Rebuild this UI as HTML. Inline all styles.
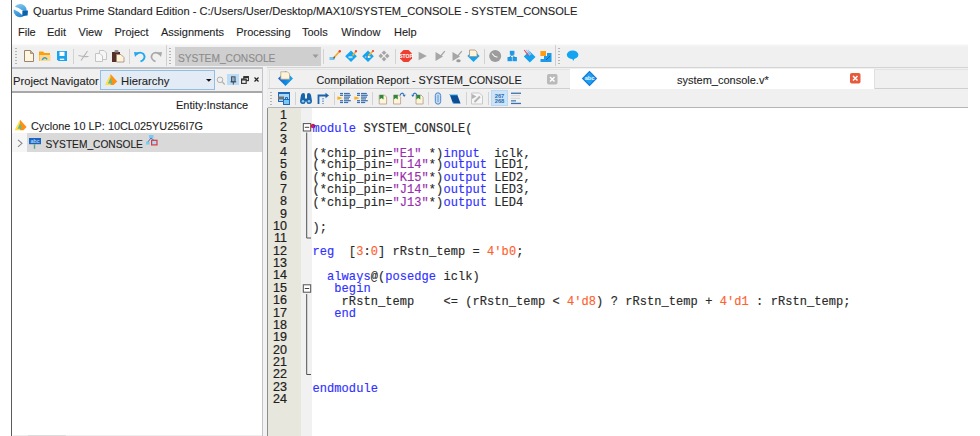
<!DOCTYPE html>
<html><head><meta charset="utf-8">
<style>
*{margin:0;padding:0;box-sizing:border-box}
html,body{width:980px;height:436px;overflow:hidden;background:#fff;position:relative}
body{font-family:"Liberation Sans",sans-serif;font-size:11px;color:#1e1e1e}
.a{position:absolute}
.t{position:absolute;white-space:pre;line-height:1;-webkit-text-stroke:0.1px}
svg{position:absolute;overflow:visible}
.sep{position:absolute;width:1px;background:#d2d2d2}
.grip{position:absolute;width:1.5px;background:repeating-linear-gradient(#b4b4b4 0 1px,transparent 1px 3px)}
.code{position:absolute;left:312.5px;top:109.5px;font-family:"Liberation Mono",monospace;font-size:12px;line-height:10.851px;white-space:pre;color:#2a2a2a;transform:scaleY(1.14);transform-origin:0 0;-webkit-text-stroke:0.15px;letter-spacing:0.07px}
.ln{position:absolute;left:268px;width:19px;top:108.6px;-webkit-text-stroke:0.2px;text-align:right;font-family:"Liberation Sans",sans-serif;font-size:12.5px;line-height:12.37px;white-space:pre;color:#202020}
.k{color:#3030ff}
.s{color:#9a2cb0}
.n{color:#ff6030}
</style></head><body>
<!-- left border -->
<div class="a" style="left:11px;top:0;width:1px;height:436px;background:#5a5a5a"></div>

<!-- title bar -->
<svg style="left:13px;top:3px" width="16" height="16" viewBox="0 0 16 16">
  <defs><linearGradient id="qg" x1="0" y1="0" x2="0.3" y2="1"><stop offset="0" stop-color="#86ccf2"/><stop offset="1" stop-color="#2c8ad0"/></linearGradient></defs>
  <circle cx="7.2" cy="7.7" r="6.6" fill="url(#qg)"/>
  <path d="M1.2 3.6 Q5.5 4.2 10.2 8 L9.8 12.6 Q5.5 8 0.9 6.4 Z" fill="#fff"/>
  <path d="M9.4 7.9 L15 7.4 L14.6 12.6 L9.3 13.1 Z" fill="#0a62ae"/>
</svg>
<div class="t" style="left:33px;top:6px;font-size:11.1px">Quartus Prime Standard Edition - C:/Users/User/Desktop/MAX10/SYSTEM_CONSOLE - SYSTEM_CONSOLE</div>

<!-- menu bar -->
<div class="t" style="left:18px;top:27px">File</div>
<div class="t" style="left:47px;top:27px">Edit</div>
<div class="t" style="left:78.5px;top:27px">View</div>
<div class="t" style="left:114.4px;top:27px">Project</div>
<div class="t" style="left:161px;top:27px">Assignments</div>
<div class="t" style="left:236.2px;top:27px">Processing</div>
<div class="t" style="left:302px;top:27px">Tools</div>
<div class="t" style="left:341.3px;top:27px">Window</div>
<div class="t" style="left:394px;top:27px">Help</div>

<!-- main toolbar -->
<div class="a" style="left:12px;top:44px;width:956px;height:23px;background:linear-gradient(#fafafa,#f0f0f0 3px)"></div>
<div class="a" style="left:12px;top:66.5px;width:956px;height:1px;background:#d0d0d0"></div>
<div class="grip" style="left:15px;top:48px;height:17px"></div>
<!-- new -->
<svg style="left:23px;top:49px" width="12" height="14" viewBox="0 0 12 14">
  <path d="M1.5 1.5 H7.5 L10.5 4.5 V12.5 H1.5Z" fill="#fff6de" stroke="#9e8270" stroke-width="1"/>
  <path d="M7.5 1.5 V4.5 H10.5" fill="#c8b0a0" stroke="#9e8270" stroke-width="0.8"/>
</svg>
<!-- open -->
<svg style="left:38px;top:50px" width="14" height="12" viewBox="0 0 14 12">
  <path d="M1 1.5 H5 L6.5 3 H12 V11 H1Z" fill="#ff9f10"/>
  <path d="M1.5 5 H12.5 V11 H1.5Z" fill="#ffd98a"/>
  <path d="M4.2 9.8 Q6.5 5.8 9.2 9.4" fill="none" stroke="#2aa0d8" stroke-width="1.5"/>
</svg>
<!-- save -->
<svg style="left:56px;top:50px" width="12" height="12" viewBox="0 0 12 12">
  <path d="M1 1 H11 V11 H2.5 L1 9.5Z" fill="#1aa4f0"/>
  <rect x="3.5" y="1.8" width="5" height="4.2" fill="#fff"/>
  <rect x="3.8" y="8.6" width="4.4" height="1.4" fill="#e8f4ff"/>
</svg>
<div class="sep" style="left:73px;top:49px;height:15px"></div>
<!-- cut -->
<svg style="left:77px;top:50px" width="13" height="12" viewBox="0 0 13 12">
  <path d="M10.5 1 L4 10.5 M1.5 5.5 Q6 7 11.5 6.5" fill="none" stroke="#b4b4b4" stroke-width="1.1"/>
</svg>
<!-- copy -->
<svg style="left:94px;top:49px" width="14" height="14" viewBox="0 0 14 14">
  <path d="M5.5 1.5 H10 L12.5 4 V10.5 H5.5Z" fill="#f6f6f6" stroke="#c4c4c4"/>
  <path d="M1.5 4.5 H6 L8.5 7 V12.5 H1.5Z" fill="#f8f8f8" stroke="#c4c4c4"/>
</svg>
<!-- paste -->
<svg style="left:111px;top:49px" width="14" height="14" viewBox="0 0 14 14">
  <path d="M1 3 H9 V13 H1Z" fill="#553028"/>
  <rect x="3.5" y="1" width="4" height="2.4" rx="1" fill="#8a8a8a"/>
  <path d="M5.5 5.5 H10 L13 8.5 V13 H5.5Z" fill="#fff4d8" stroke="#a08878" stroke-width="0.8"/>
</svg>
<div class="sep" style="left:129px;top:49px;height:15px"></div>
<!-- undo -->
<svg style="left:133px;top:50px" width="14" height="13" viewBox="0 0 14 13">
  <path d="M3 4.5 Q7 1 10.5 4 Q13 7.5 9.5 10.5 L7.5 11.5" fill="none" stroke="#20a8f0" stroke-width="1.8"/>
  <path d="M1 2 L6 2.5 L2 7Z" fill="#20a8f0"/>
</svg>
<!-- redo -->
<svg style="left:149px;top:50px" width="14" height="13" viewBox="0 0 14 13">
  <path d="M11 4.5 Q7 1 3.5 4 Q1 7.5 4.5 10.5 L6.5 11.5" fill="none" stroke="#a8a8a8" stroke-width="1.6"/>
  <path d="M13 2 L8 2.5 L12 7Z" fill="#a8a8a8"/>
</svg>
<div class="a" style="left:166px;top:45px;width:1px;height:21px;background:#d0d0d0"></div>
<div class="grip" style="left:169px;top:48px;height:17px"></div>
<!-- project combo -->
<div class="a" style="left:175px;top:46.5px;width:146px;height:19.5px;background:#cfcfcf"></div>
<div class="t" style="left:178px;top:53.5px;color:#8c8c8c;font-size:10.2px">SYSTEM_CONSOLE</div>
<svg style="left:312px;top:54px" width="7" height="5" viewBox="0 0 7 5"><path d="M0.5 0.5 H6.5 L3.5 4Z" fill="#9a9a9a"/></svg>
<div class="sep" style="left:323px;top:49px;height:15px"></div>
<!-- pencil icon 1 -->
<svg style="left:328px;top:49px" width="14" height="13" viewBox="0 0 14 13">
  <rect x="1.5" y="8" width="5" height="3" fill="#6ec6f4"/>
  <path d="M6 8.5 L11.5 2.5" stroke="#f0b030" stroke-width="1.8"/>
  <path d="M5.5 9.5 L6.8 7.6" stroke="#806040" stroke-width="1.4"/>
  <circle cx="11.8" cy="2.2" r="1.2" fill="#f04030"/>
</svg>
<!-- diamond pencil -->
<svg style="left:344px;top:49px" width="14" height="14" viewBox="0 0 14 14">
  <path d="M7 1.5 L12.8 7.3 L7 13 L1.2 7.3Z" fill="#12a4f0"/>
  <rect x="4.5" y="7.2" width="4" height="2" fill="#b0e0ff"/>
  <path d="M8.6 6.4 L12 2.4" stroke="#f0b030" stroke-width="1.6"/>
  <circle cx="12" cy="2.2" r="1.1" fill="#f04030"/>
</svg>
<!-- diamond eye -->
<svg style="left:361px;top:49px" width="14" height="14" viewBox="0 0 14 14">
  <path d="M7 1.5 L12.8 7.3 L7 13 L1.2 7.3Z" fill="#12a4f0"/>
  <path d="M3.5 8 Q7 5.8 10.2 8 Q7 10 3.5 8Z" fill="#fff"/>
  <circle cx="6" cy="8" r="1" fill="#4a7ab8"/>
  <path d="M7.6 6.6 L11.8 2.2" stroke="#f0b030" stroke-width="1.6"/>
  <circle cx="12" cy="2" r="1.1" fill="#f04030"/>
</svg>
<!-- gray diamonds -->
<svg style="left:377px;top:49px" width="14" height="14" viewBox="0 0 14 14" fill="#a4a4a4">
  <path d="M7 1.5 L9.3 3.8 L7 6 L4.7 3.8Z"/>
  <path d="M3.8 4.6 L6.1 6.9 L3.8 9.2 L1.5 6.9Z"/>
  <path d="M10.2 4.6 L12.5 6.9 L10.2 9.2 L7.9 6.9Z"/>
  <path d="M7 7.8 L9.3 10.1 L7 12.4 L4.7 10.1Z"/>
</svg>
<div class="sep" style="left:395px;top:49px;height:15px"></div>
<!-- stop -->
<svg style="left:399px;top:49px" width="14" height="14" viewBox="0 0 14 14">
  <path d="M4.5 1 H9.5 L13 4.5 V9.5 L9.5 13 H4.5 L1 9.5 V4.5Z" fill="#ee3e30"/>
  <text x="7" y="9" font-family="Liberation Sans" font-size="5" font-weight="bold" fill="#fff" text-anchor="middle">STOP</text>
</svg>
<!-- play -->
<svg style="left:418px;top:51px" width="10" height="10" viewBox="0 0 10 10"><path d="M0.6 0.8 L8.8 5 L0.6 9.2Z" fill="#a6a6a6"/></svg>
<!-- play check -->
<svg style="left:434px;top:50px" width="12" height="12" viewBox="0 0 12 12">
  <path d="M1.5 2 L9 6.5 L1.5 11Z" fill="#a6a6a6"/>
  <path d="M5.5 7.5 L10.8 1.2" stroke="#a6a6a6" stroke-width="1.3"/>
</svg>
<!-- play dot -->
<svg style="left:451px;top:50px" width="13" height="13" viewBox="0 0 13 13">
  <path d="M1.5 2 L9 6.5 L1.5 11Z" fill="#a6a6a6"/>
  <path d="M5.5 7.5 L10.8 1.2" stroke="#a6a6a6" stroke-width="1.3"/>
  <ellipse cx="7.5" cy="10.8" rx="2.2" ry="1.5" fill="#9a9a9a"/>
</svg>
<!-- diamond doc -->
<svg style="left:466px;top:49px" width="15" height="14" viewBox="0 0 15 14">
  <path d="M7.5 1 L13.6 7 L7.5 13 L1.4 7Z" fill="#10a4f0"/>
  <path d="M3.5 1 H9 L11 3 V7.5 H3.5Z" fill="#fff4d8" stroke="#a89080" stroke-width="0.8"/>
</svg>
<div class="sep" style="left:484px;top:49px;height:15px"></div>
<!-- clock -->
<svg style="left:488px;top:49px" width="14" height="14" viewBox="0 0 14 14">
  <circle cx="7.2" cy="7" r="6" fill="#9c9c9c"/>
  <path d="M4 4.5 L6.5 7.2 L9.5 8.2" fill="none" stroke="#f4f4f4" stroke-width="1.1"/>
</svg>
<!-- hierarchy -->
<svg style="left:506px;top:50px" width="13" height="13" viewBox="0 0 13 13" fill="#1a9ae8">
  <rect x="3.8" y="0.8" width="4.6" height="4" />
  <rect x="1.5" y="7" width="4.4" height="4.2"/>
  <rect x="6.5" y="7" width="4.4" height="4.2"/>
  <path d="M6 4.5 L3.5 7.5 M6 4.5 L8.8 7.5" stroke="#1a6ab0" stroke-width="0.9"/>
</svg>
<!-- diamond stripes -->
<svg style="left:522px;top:49px" width="15" height="14" viewBox="0 0 15 14">
  <path d="M7.5 2 L13.5 8 L7.8 13.4 L1.8 7.6Z" fill="#12a2f0"/>
  <path d="M2.2 1 L6.8 7" stroke="#e84a50" stroke-width="1.2"/>
  <path d="M4.2 0.8 L7.8 6.5 M6 0.8 L9 5.8" stroke="#a8c8f0" stroke-width="1.1"/>
</svg>
<!-- chip -->
<svg style="left:539px;top:50px" width="14" height="13" viewBox="0 0 14 13">
  <rect x="1.4" y="1" width="5.6" height="5" fill="#ff9c10"/>
  <path d="M5 6 H8 V3 H12.5 V12 H1.5 V9 H5Z" fill="#1a9ae8"/>
  <path d="M7 10 L11 6" stroke="#1060b0" stroke-width="1"/>
</svg>
<div class="a" style="left:555px;top:45px;width:1px;height:21px;background:#d0d0d0"></div>
<div class="grip" style="left:558px;top:48px;height:17px"></div>
<!-- bubble -->
<svg style="left:566px;top:50px" width="14" height="12" viewBox="0 0 14 12">
  <ellipse cx="6.6" cy="4.8" rx="5.8" ry="4.3" fill="#12a4f0"/>
  <path d="M5.5 8 L7.5 11 L8.5 7.5Z" fill="#12a4f0"/>
</svg>
<!-- nav panel -->
<div class="a" style="left:12px;top:67px;width:251px;height:24px;background:#f0f0f0"></div>
<div class="a" style="left:12px;top:67px;width:251px;height:1.5px;background:#c0c4c8"></div>
<div class="a" style="left:12px;top:90.5px;width:251px;height:2px;background:#a8a8a8"></div>
<div class="t" style="left:13px;top:75.5px;font-size:11.2px">Project Navigator</div>
<div class="a" style="left:100px;top:70px;width:115px;height:19.5px;background:#e3ebf4;border:1px solid #92bde4"></div>
<svg style="left:104px;top:73px" width="14" height="13" viewBox="0 0 14 13">
  <path d="M6.5 1 L1 12 H6.5Z" fill="#ffe040"/>
  <path d="M6.5 1 L13.2 8.5 L9.5 12 H6.5Z" fill="#ff9010"/>
  <path d="M6.5 4.5 L4 10.5 H8.5Z" fill="#62b890"/>
</svg>
<div class="t" style="left:121px;top:76px;font-size:11.3px">Hierarchy</div>
<svg style="left:206px;top:78.5px" width="6" height="3" viewBox="0 0 6 3"><path d="M0 0 H5.6 L2.8 2.8Z" fill="#111"/></svg>
<svg style="left:216px;top:76px" width="10" height="9" viewBox="0 0 10 9">
  <circle cx="4" cy="3.8" r="2.8" fill="none" stroke="#b0b0b0" stroke-width="1"/>
  <path d="M6 5.8 L8.8 8.5" stroke="#b0b0b0" stroke-width="1.2"/>
</svg>
<div class="a" style="left:227px;top:74px;width:11.5px;height:11px;background:#bcdcf6"></div>
<svg style="left:230px;top:76px" width="7" height="9" viewBox="0 0 7 9">
  <rect x="1.5" y="0.8" width="3.6" height="5" fill="#90a8c0" stroke="#3c4c5c" stroke-width="0.9"/>
  <path d="M0.5 5.8 H6.2 M3.3 5.8 V8.6" stroke="#3c4c5c" stroke-width="1"/>
</svg>
<svg style="left:241px;top:76px" width="8" height="8" viewBox="0 0 8 8">
  <rect x="2.8" y="0.6" width="4.6" height="4" fill="none" stroke="#303030" stroke-width="1.1"/>
  <rect x="0.6" y="3" width="4.6" height="4.4" fill="#f0f0f0" stroke="#303030" stroke-width="1.1"/>
  <path d="M0.6 3.8 H5.2 M2.8 1.4 H7.4" stroke="#303030" stroke-width="1.2"/>
</svg>
<svg style="left:254px;top:77px" width="5" height="5" viewBox="0 0 5 5"><path d="M0.5 0.5 L4.5 4.5 M4.5 0.5 L0.5 4.5" stroke="#222" stroke-width="1.2"/></svg>

<div class="a" style="left:12px;top:92.5px;width:250px;height:344px;background:#fff"></div>
<div class="a" style="left:262px;top:67px;width:1.5px;height:369px;background:#c0c4c8"></div>
<div class="a" style="left:263px;top:67px;width:4px;height:369px;background:#f2f2f2"></div>
<div class="t" style="left:176px;top:100px">Entity:Instance</div>
<svg style="left:14px;top:118.5px" width="14" height="12" viewBox="0 0 14 12">
  <path d="M6 0.8 L0.6 11.2 H6Z" fill="#ffe040"/>
  <path d="M6 0.8 L12.6 8 L9.4 11.2 H6Z" fill="#ff9010"/>
  <path d="M6 4.2 L3.6 9.8 H8Z" fill="#62b890"/>
</svg>
<div class="t" style="left:31px;top:121px;font-size:10.9px">Cyclone 10 LP: 10CL025YU256I7G</div>
<div class="a" style="left:12px;top:133px;width:15px;height:18.5px;background:#f6f6f6"></div>
<div class="a" style="left:27px;top:133px;width:235px;height:18.5px;background:#d9d9d9"></div>
<svg style="left:17px;top:139px" width="6" height="9" viewBox="0 0 6 9"><path d="M1 0.8 L5 4.3 L1 7.8" fill="none" stroke="#888" stroke-width="1.1"/></svg>
<svg style="left:28px;top:137px" width="14" height="13" viewBox="0 0 14 13">
  <rect x="1" y="1" width="12" height="6.2" fill="#1a64c0"/>
  <text x="7" y="6.2" font-family="Liberation Sans" font-size="5.5" fill="#cfe4ff" text-anchor="middle">abc</text>
  <path d="M6.5 7.2 V11.8" stroke="#58a878" stroke-width="1.4"/>
</svg>
<div class="t" style="left:45.5px;top:139.5px;font-size:10.2px">SYSTEM_CONSOLE</div>
<svg style="left:145px;top:134px" width="14" height="12" viewBox="0 0 14 12">
  <rect x="4" y="1" width="4.5" height="3.2" fill="#7ccaf4"/>
  <rect x="1" y="7.6" width="3.6" height="3" fill="#7ccaf4"/>
  <path d="M6 4 L3 7.8 M6 4 L9 6.4" stroke="#3a68a8" stroke-width="0.9"/>
  <rect x="6.6" y="6.3" width="5.4" height="4.6" fill="#a8dcf8" stroke="#e03840" stroke-width="1.2"/>
</svg>
<div class="a" style="left:13px;top:435px;width:249px;height:1px;background:#eeeeee"></div>
<div class="a" style="left:28px;top:435px;width:38px;height:1px;background:#dcdcdc"></div>

<!-- editor panel -->
<div class="a" style="left:267px;top:67px;width:701px;height:369px;background:#f0f0f0"></div>
<div class="a" style="left:267px;top:67px;width:1px;height:41px;background:#ececec"></div><div class="a" style="left:267px;top:108px;width:1px;height:328px;background:#8c8c8c"></div>
<!-- tab row -->
<div class="a" style="left:267px;top:66.5px;width:701px;height:1.5px;background:#d4d4d4"></div>
<div class="a" style="left:268px;top:69px;width:302px;height:1px;background:#e4e4e4"></div>
<div class="a" style="left:874px;top:69px;width:94px;height:1px;background:#e4e4e4"></div>

<div class="a" style="left:268.5px;top:70px;width:1px;height:18.5px;background:#e0e0e0"></div>
<div class="a" style="left:268px;top:88px;width:302px;height:1px;background:#cfcfcf"></div>
<div class="a" style="left:874px;top:88px;width:94px;height:1px;background:#cfcfcf"></div>
<div class="a" style="left:570px;top:68.5px;width:304px;height:20px;background:#fff"></div>
<div class="a" style="left:874px;top:68.5px;width:1px;height:20px;background:#e0e0e0"></div>
<svg style="left:277px;top:70px" width="17" height="17" viewBox="0 0 17 17">
  <defs><linearGradient id="dg" x1="0" y1="0" x2="1" y2="0"><stop offset="0" stop-color="#1a64c8"/><stop offset="1" stop-color="#10a8f4"/></linearGradient></defs>
  <path d="M8.5 1 L16 8.5 L8.5 16 L1 8.5Z" fill="url(#dg)"/>
  <path d="M3.8 1.8 H10.5 L12.6 3.9 V9.2 H3.8Z" fill="#fff4d8" stroke="#b09c8c" stroke-width="0.7"/>
</svg>
<div class="t" style="left:316.5px;top:75px;font-size:10.8px">Compilation Report - SYSTEM_CONSOLE</div>
<svg style="left:547px;top:74px" width="10.5" height="10.5" viewBox="0 0 10.5 10.5">
  <rect x="0" y="0" width="10.5" height="10.5" rx="1.8" fill="#bababa"/>
  <path d="M3 3 L7.5 7.5 M7.5 3 L3 7.5" stroke="#fff" stroke-width="1.5"/>
</svg>
<svg style="left:581px;top:70px" width="17" height="17" viewBox="0 0 17 17">
  <path d="M8.5 0.8 L16.2 8.5 L8.5 16.2 L0.8 8.5Z" fill="#1878d8"/>
  <path d="M8.5 2.6 L14.4 8.5 L8.5 14.4 L2.6 8.5Z" fill="#1ea0f0"/>
  <text x="8.5" y="10.3" font-family="Liberation Sans" font-size="5.6" font-weight="bold" fill="#e8f6ff" text-anchor="middle">abc</text>
</svg>
<div class="t" style="left:677px;top:75px">system_console.v*</div>
<svg style="left:850px;top:73px" width="10.5" height="10.5" viewBox="0 0 10.5 10.5">
  <rect x="0" y="0" width="10.5" height="10.5" rx="1.8" fill="#e85a3c"/>
  <path d="M3 3 L7.5 7.5 M7.5 3 L3 7.5" stroke="#fff" stroke-width="1.5"/>
</svg>
<!-- editor toolbar -->
<div class="a" style="left:268px;top:107px;width:700px;height:1.5px;background:#b4b4b8"></div>
<div class="grip" style="left:270px;top:92px;height:14px"></div>
<svg style="left:277px;top:91px" width="14" height="14" viewBox="0 0 14 14">
  <rect x="1.5" y="1.5" width="11" height="9" fill="#a8d8f8" stroke="#1e6ab8" stroke-width="1"/>
  <rect x="1" y="1" width="12" height="2" fill="#1e6ab8"/>
  <rect x="1" y="5.5" width="6" height="3" fill="#707070"/>
  <rect x="6.5" y="8.5" width="6" height="5" fill="#7cc8f4" stroke="#1e6ab8" stroke-width="1"/>
  <path d="M8.5 8.5 V6.5 H10.5 V8.5" fill="none" stroke="#1e6ab8" stroke-width="1"/>
</svg>
<div class="sep" style="left:295px;top:92px;height:13px"></div>
<svg style="left:299px;top:92px" width="14" height="13" viewBox="0 0 14 13" fill="#1a64aa">
  <path d="M2 3 Q2.5 1 4.5 1 Q6 1 6 3 V6.5 H8 V3 Q8 1 9.5 1 Q11.5 1 12 3 L13 9 Q13 12 10 12 Q7.5 12 7.5 9.5 H6.5 Q6.5 12 4 12 Q1 12 1 9Z"/>
  <circle cx="4" cy="9.3" r="1.3" fill="#8cc8f0"/>
  <circle cx="10" cy="9.3" r="1.3" fill="#8cc8f0"/>
</svg>
<svg style="left:316px;top:92px" width="14" height="13" viewBox="0 0 14 13">
  <path d="M2.5 12 V3.5 H10" fill="none" stroke="#1a64aa" stroke-width="1.8"/>
  <path d="M9.5 0.8 L13 3.5 L9.5 6.2Z" fill="#1a64aa"/>
  <path d="M7 6 V12" stroke="#4a88c8" stroke-width="1.2" stroke-dasharray="1.5 1"/>
</svg>
<div class="sep" style="left:334px;top:92px;height:13px"></div>
<svg style="left:337px;top:92px" width="14" height="12" viewBox="0 0 14 12" fill="#3a70b0">
  <rect x="3" y="0.9" width="3" height="1.2"/>
  <rect x="7" y="0.9" width="5.800000000000001" height="1.2"/>
  <rect x="3" y="2.6999999999999997" width="3" height="1.2"/>
  <rect x="7" y="2.6999999999999997" width="6.800000000000001" height="1.2"/>
  <rect x="7" y="4.5" width="6" height="1.2"/>
  <rect x="7" y="6.300000000000001" width="5" height="1.2"/>
  <rect x="3" y="8.1" width="3" height="1.2"/>
  <rect x="7" y="8.1" width="6.800000000000001" height="1.2"/>
  <rect x="3" y="9.9" width="3" height="1.2"/>
  <rect x="7" y="9.9" width="4.199999999999999" height="1.2"/>
  <path d="M0.3 4.4 Q3 4.6 5.6 6.1 Q3 7.6 0.3 7.8Z" fill="#f8b020"/>
</svg>
<svg style="left:354px;top:92px" width="14" height="12" viewBox="0 0 14 12" fill="#3a70b0">
  <rect x="3" y="0.9" width="3" height="1.2"/>
  <rect x="7" y="0.9" width="5.800000000000001" height="1.2"/>
  <rect x="3" y="2.6999999999999997" width="3" height="1.2"/>
  <rect x="7" y="2.6999999999999997" width="6.800000000000001" height="1.2"/>
  <rect x="7" y="4.5" width="6" height="1.2"/>
  <rect x="7" y="6.300000000000001" width="5" height="1.2"/>
  <rect x="3" y="8.1" width="3" height="1.2"/>
  <rect x="7" y="8.1" width="6.800000000000001" height="1.2"/>
  <rect x="3" y="9.9" width="3" height="1.2"/>
  <rect x="7" y="9.9" width="4.199999999999999" height="1.2"/>
  <path d="M0.3 4.4 Q3 4.6 5.6 6.1 Q3 7.6 0.3 7.8Z" fill="#f8b020"/>
</svg>
<div class="sep" style="left:372px;top:92px;height:13px"></div>
<svg style="left:378px;top:94px" width="10" height="11" viewBox="0 0 10 11">
  <path d="M1.2 1 H6.5 L8.6 3.1 V10 H1.2Z" fill="#fff4d8" stroke="#b09c8c" stroke-width="0.8"/>
  <path d="M1.5 1 H5.5 V5.5 L3.5 4 L1.5 5.5Z" fill="#2a8a3a"/>
</svg>
<svg style="left:392px;top:91px" width="15" height="14" viewBox="0 0 15 14">
  <path d="M1.5 4 H6.5 L8.6 6.1 V13 H1.5Z" fill="#fff4d8" stroke="#b09c8c" stroke-width="0.8"/>
  <path d="M1.8 4 H5.8 V8.5 L3.8 7 L1.8 8.5Z" fill="#2a8a3a"/>
  <path d="M8 4.5 Q9.5 0.5 12 3.5" fill="none" stroke="#2a70c0" stroke-width="1.2"/>
  <path d="M10.5 3.8 L13.8 3.8 L12.2 6Z" fill="#2a70c0"/>
</svg>
<svg style="left:410px;top:91px" width="15" height="14" viewBox="0 0 15 14">
  <path d="M6 4 H11 L13.1 6.1 V13 H6Z" fill="#fff4d8" stroke="#b09c8c" stroke-width="0.8"/>
  <path d="M6.3 4 H10.3 V8.5 L8.3 7 L6.3 8.5Z" fill="#2a8a3a"/>
  <path d="M7 4.5 Q5.5 0.5 3 3.5" fill="none" stroke="#2a70c0" stroke-width="1.2"/>
  <path d="M4.5 3.8 L1.2 3.8 L2.8 6Z" fill="#2a70c0"/>
</svg>
<div class="sep" style="left:428px;top:92px;height:13px"></div>
<svg style="left:434px;top:92px" width="8" height="13" viewBox="0 0 8 13">
  <rect x="1.3" y="0.8" width="5.4" height="11.4" rx="2.7" fill="#c4dcf4" stroke="#4a88c8" stroke-width="1"/>
  <path d="M4 3 V10" stroke="#4a88c8" stroke-width="0.8"/>
</svg>
<svg style="left:448px;top:93px" width="14" height="12" viewBox="0 0 14 12">
  <path d="M1.5 1 H9 L12.6 10.6 H5Z" fill="#0a4e98"/>
  <path d="M1.5 1 H9 L9.5 2.2 H2Z" fill="#8cd0f8"/>
  <path d="M4.5 9.5 H5.5 L5.9 10.6 H5Z" fill="#8cd0f8"/>
</svg>
<div class="sep" style="left:466px;top:92px;height:13px"></div>
<svg style="left:470px;top:92px" width="14" height="13" viewBox="0 0 14 13">
  <path d="M1.5 1 H9.5 L12.5 4 V12 H1.5Z" fill="#f6f6f6" stroke="#c8c8c8" stroke-width="1"/>
  <path d="M2 2 L6.5 4.5 L2 7Z" fill="#b4b4b4"/>
  <path d="M4.5 10 L10 4.5" stroke="#b4b4b4" stroke-width="2"/>
</svg>
<div class="sep" style="left:488px;top:92px;height:13px"></div>
<div class="a" style="left:491px;top:90px;width:17px;height:15.5px;background:#cce4f8;border:1px solid #b8d8f4"></div>
<svg style="left:493px;top:93px" width="13" height="11" viewBox="0 0 13 11">
  <text x="6.5" y="5" font-family="Liberation Sans" font-size="5.8" font-weight="bold" fill="#2a6ab0" text-anchor="middle">267</text>
  <text x="6.5" y="10.3" font-family="Liberation Sans" font-size="5.8" font-weight="bold" fill="#2a6ab0" text-anchor="middle">268</text>
</svg>
<svg style="left:510px;top:92px" width="12" height="13" viewBox="0 0 12 13">
  <rect x="1" y="0.6" width="10" height="1.3" fill="#3a72b0"/>
  <rect x="1" y="3.2" width="9" height="1" fill="#d4d4d4"/>
  <rect x="1" y="5.8" width="9" height="1" fill="#d4d4d4"/>
  <rect x="1" y="8.2" width="5" height="1.3" fill="#4a80bc"/>
  <rect x="1" y="10.8" width="10" height="1.3" fill="#3a72b0"/>
</svg>
<!-- gutter -->
<div class="a" style="left:268px;top:108px;width:33px;height:328px;background:#e8e7dd"></div>
<div class="a" style="left:301px;top:108px;width:11px;height:328px;background:#f1f1f1"></div>
<div class="a" style="left:312px;top:108px;width:656px;height:328px;background:#fff"></div>
<!-- fold markers -->
<svg style="left:302px;top:122px" width="10" height="300" viewBox="0 0 10 300">
  <rect x="1.3" y="1.6" width="7.4" height="7.4" fill="#fff" stroke="#505050" stroke-width="1"/>
  <path d="M2.8 5.3 H7.2" stroke="#404040" stroke-width="1"/>
  <path d="M4.7 10.5 V116 H9" fill="none" stroke="#505050" stroke-width="1"/>
  <rect x="1.3" y="162.8" width="7.4" height="7.4" fill="#fff" stroke="#505050" stroke-width="1"/>
  <path d="M2.8 166.5 H7.2" stroke="#404040" stroke-width="1"/>
  <path d="M4.7 172 V252.5 H9" fill="none" stroke="#505050" stroke-width="1"/>
</svg>
<svg style="left:310px;top:123px" width="6" height="6" viewBox="0 0 6 6"><circle cx="3" cy="3" r="2.2" fill="#ee1010"/></svg>
<div class="ln">1
2
3
4
5
6
7
8
9
10
11
12
13
14
15
16
17
18
19
20
21
22
23
24</div>
<div class="code">
<span class="k">module</span> SYSTEM_CONSOLE(

(*chip_pin=<span class="s">"E1"</span> *)<span class="k">input</span>  iclk,
(*chip_pin=<span class="s">"L14"</span>*)<span class="k">output</span> LED1,
(*chip_pin=<span class="s">"K15"</span>*)<span class="k">output</span> LED2,
(*chip_pin=<span class="s">"J14"</span>*)<span class="k">output</span> LED3,
(*chip_pin=<span class="s">"J13"</span>*)<span class="k">output</span> LED4

);

<span class="k">reg</span>  [<span class="n">3</span>:<span class="n">0</span>] rRstn_temp = <span class="n">4'b0</span>;

  <span class="k">always</span>@(<span class="k">posedge</span> iclk)
   <span class="k">begin</span>
    rRstn_temp    &lt;= (rRstn_temp &lt; <span class="n">4'd8</span>) ? rRstn_temp + <span class="n">4'd1</span> : rRstn_temp;
   <span class="k">end</span>





<span class="k">endmodule</span>
</div>
</body></html>
